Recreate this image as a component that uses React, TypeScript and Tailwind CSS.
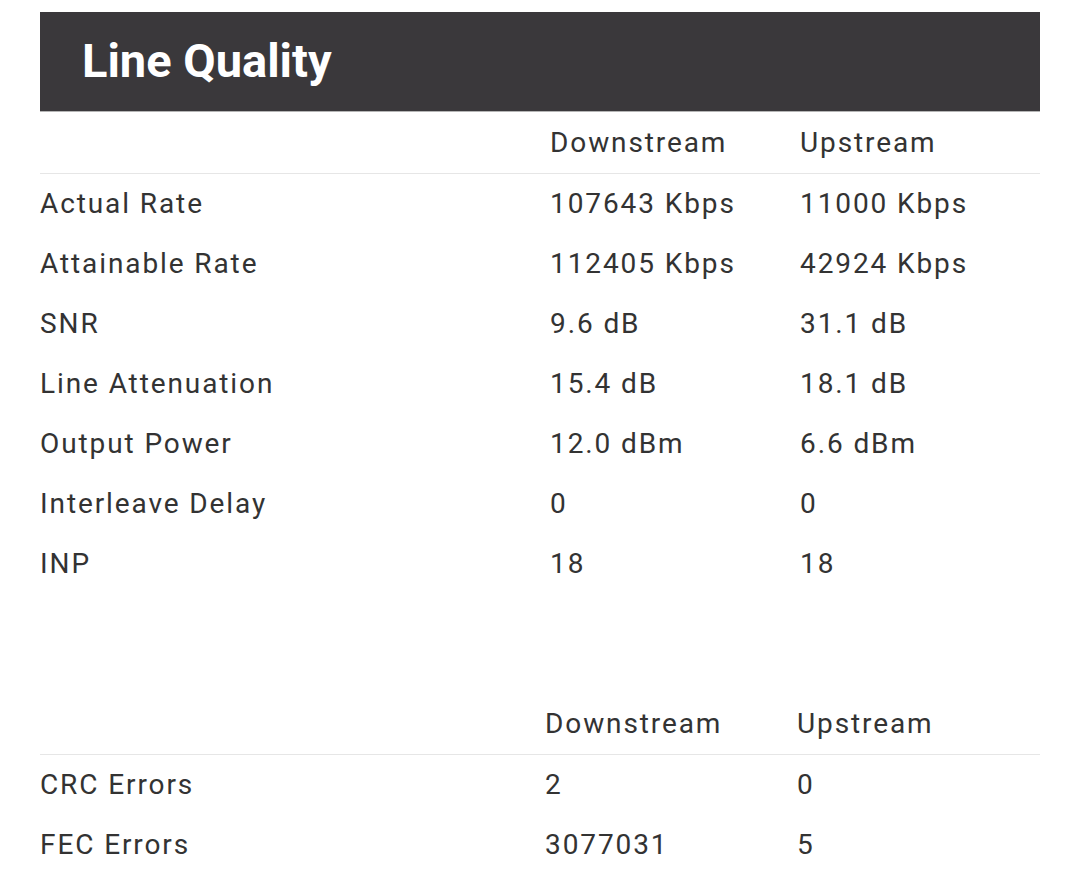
const lineRows = [
  { label: "Actual Rate", down: "107643 Kbps", up: "11000 Kbps" },
  { label: "Attainable Rate", down: "112405 Kbps", up: "42924 Kbps" },
  { label: "SNR", down: "9.6 dB", up: "31.1 dB" },
  { label: "Line Attenuation", down: "15.4 dB", up: "18.1 dB" },
  { label: "Output Power", down: "12.0 dBm", up: "6.6 dBm" },
  { label: "Interleave Delay", down: "0", up: "0" },
  { label: "INP", down: "18", up: "18" },
];

const errorRows = [
  { label: "CRC Errors", down: "2", up: "0" },
  { label: "FEC Errors", down: "3077031", up: "5" },
];

type Row = { label: string; down: string; up: string };

function StatsTable({
  rows,
  labelWidth,
  downWidth,
}: {
  rows: Row[];
  labelWidth: string;
  downWidth: string;
}) {
  return (
    <div>
      <div className="flex h-[62px] items-center border-b border-[#e6e6e6] pt-[1px]">
        <div className={labelWidth} />
        <div className={downWidth}>Downstream</div>
        <div>Upstream</div>
      </div>
      {rows.map((row) => (
        <div key={row.label} className="flex h-[60px] items-center">
          <div className={labelWidth}>{row.label}</div>
          <div className={downWidth}>{row.down}</div>
          <div>{row.up}</div>
        </div>
      ))}
    </div>
  );
}

export default function App() {
  return (
    <div
      className="min-h-[891px] bg-white px-10 pt-3 text-[28px] tracking-[1.9px] text-[#333333]"
      style={{ fontFamily: "Roboto, 'Liberation Sans', sans-serif" }}
    >
      <div className="flex h-[100px] items-center border-b border-[#b5b5b5] bg-[#3a383b] pl-[42px]">
        <h1 className="text-[47px] font-bold tracking-[0px] text-white">
          Line Quality
        </h1>
      </div>

      <StatsTable rows={lineRows} labelWidth="w-[510px]" downWidth="w-[250px]" />

      <div className="mt-[99px]">
        <StatsTable rows={errorRows} labelWidth="w-[505px]" downWidth="w-[252px]" />
      </div>
    </div>
  );
}
